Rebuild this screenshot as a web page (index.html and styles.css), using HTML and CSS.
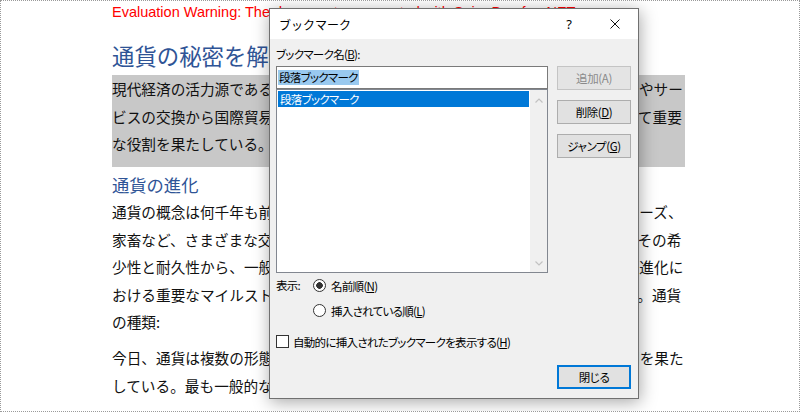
FILE: index.html
```html
<!DOCTYPE html>
<html lang="ja">
<head>
<meta charset="utf-8">
<title>ブックマーク</title>
<link rel="stylesheet" href="styles.css">
</head>
<body>
<div class="doc">
  <p class="warning">Evaluation Warning: The document was created with Spire.Doc for .NET.</p>
  <h1 class="h1">通貨の秘密を解き明かす</h1>
  <p class="para shaded">現代経済の活力源である通貨は、日常の買物から大規模な投資まで、各種の商品やサー<br>ビスの交換から国際貿易に至るまで、世界中のあらゆる経済活動において、極めて重要<br>な役割を果たしている。</p>
  <h2 class="h2">通貨の進化</h2>
  <p class="para p2">通貨の概念は何千年も前にさかのぼる。古代社会では、穀物や塩、貝殻、石、ビーズ、<br>家畜など、さまざまな交換手段が用いられていた。やがて、金や銀の貴金属が、その希<br>少性と耐久性から、一般的な交換手段として広く受け入れられ、通貨の歴史的な進化に<br>おける重要なマイルストーンとなった。現代では紙幣や硬貨が主流となっている。通貨<br>の種類:</p>
  <p class="para p3">今日、通貨は複数の形態で存在し、それぞれが世界経済の中で異なる重要な役割を果た<br>している。最も一般的な形態は、法定通貨である。</p>
</div>

<div class="dialog">
  <div class="titlebar">
    <span class="title">ブックマーク</span>
    <span class="tbtn help">?</span>
    <span class="tbtn close"><svg width="10" height="10" viewBox="0 0 10 10"><path d="M0.5 0.5L9.5 9.5M9.5 0.5L0.5 9.5" stroke="#111" stroke-width="1" fill="none"/></svg></span>
  </div>
  <div class="dbody">
    <div class="leftcol">
      <div class="label">ブックマーク名(<u>B</u>):</div>
      <div class="input"><span class="sel">段落ブックマーク</span></div>
      <div class="list">
        <div class="items"><div class="item selected">段落ブックマーク</div></div>
        <div class="scroll">
          <span class="sbtn up"><svg width="8" height="5" viewBox="0 0 8 5"><path d="M0.5 4.5L4 1L7.5 4.5" stroke="#c2c2c2" stroke-width="1.2" fill="none"/></svg></span>
          <span class="sbtn down"><svg width="8" height="5" viewBox="0 0 8 5"><path d="M0.5 0.5L4 4L7.5 0.5" stroke="#c2c2c2" stroke-width="1.2" fill="none"/></svg></span>
        </div>
      </div>
      <div class="sort">
        <span class="sortlabel">表示:</span>
        <div class="radios">
          <div class="opt"><span class="radio checked"></span>名前順(<u>N</u>)</div>
          <div class="opt"><span class="radio"></span>挿入されている順(<u>L</u>)</div>
        </div>
      </div>
      <div class="opt check-row"><span class="checkbox"></span>自動的に挿入されたブックマークを表示する(<u>H</u>)</div>
    </div>
    <div class="rightcol">
      <button class="btn" disabled>追加(A)</button>
      <button class="btn">削除(<u>D</u>)</button>
      <button class="btn">ジャンプ(<u>G</u>)</button>
      <button class="btn default">閉じる</button>
    </div>
  </div>
</div>
</body>
</html>
```
FILE: styles.css
```css
* {
  box-sizing: border-box;
  margin: 0;
  padding: 0;
}

html, body {
  width: 800px;
  height: 412px;
}

body {
  position: relative;
  overflow: hidden;
  background: #fff;
  border: 1px dotted #9a9a9a;
  font-family: "Noto Sans CJK JP", sans-serif;
  color: #111;
}

.doc {
  padding: 1px 0 0 111px;
}

.warning {
  font-family: "Liberation Sans", sans-serif;
  font-size: 14.5px;
  line-height: 20px;
  color: #ff0000;
  white-space: nowrap;
}

.h1 {
  margin-top: 18px;
  font-size: 22.4px;
  line-height: 30px;
  font-weight: normal;
  color: #2f5496;
  white-space: nowrap;
}

.para {
  width: 573px;
  font-size: 14.67px;
  line-height: 27.5px;
  white-space: nowrap;
}

.shaded {
  margin-top: 5px;
  padding-bottom: 9.5px;
  background: #c8c8c8;
}

.h2 {
  margin-top: 6px;
  font-size: 17.3px;
  line-height: 24px;
  font-weight: normal;
  color: #2f5496;
}

.p2 {
  margin-top: 1.25px;
}

.p3 {
  margin-top: 8.5px;
}

/* dialog */
.dialog {
  position: absolute;
  left: 268px;
  top: 7px;
  width: 370px;
  height: 391px;
  border: 1px solid #707070;
  background: #f0f0f0;
  box-shadow: 1px 3px 16px rgba(0, 0, 0, 0.35);
  display: flex;
  flex-direction: column;
  font-family: "Noto Sans CJK JP", sans-serif;
  font-size: 11.5px;
  font-feature-settings: "palt";
  letter-spacing: -0.7px;
  color: #000;
}

.titlebar {
  height: 30px;
  background: #fff;
  display: flex;
  align-items: center;
}

.title {
  flex: 1;
  padding-left: 9px;
  font-size: 12px;
  letter-spacing: 0;
  font-feature-settings: normal;
}

.tbtn {
  width: 46px;
  height: 30px;
  display: flex;
  align-items: center;
  justify-content: center;
}

.help {
  font-family: "Noto Sans", sans-serif;
  font-size: 13px;
  letter-spacing: 0;
}

.dbody {
  flex: 1;
  display: flex;
  gap: 9px;
  padding: 7px 7px 9px 6px;
}

.leftcol {
  width: 272px;
  display: flex;
  flex-direction: column;
}

.label {
  height: 16px;
  line-height: 16px;
  margin-bottom: 4px;
}

u {
  text-decoration: underline;
  text-underline-offset: 1px;
}

.input {
  height: 23px;
  border: 1px solid #7a7a7a;
  background: #fff;
  padding-left: 1px;
  display: flex;
  align-items: center;
}

.sel {
  background: #99c9ef;
  line-height: 15px;
  padding: 0 1px;
}

.list {
  height: 184px;
  border: 1px solid #828790;
  background: #fff;
  display: flex;
}

.items {
  flex: 1;
  padding: 1px;
}

.item {
  height: 16px;
  line-height: 16px;
  padding-left: 2px;
}

.item.selected {
  background: #0078d7;
  color: #fff;
}

.scroll {
  width: 17px;
  background: #f0f0f0;
  display: flex;
  flex-direction: column;
  justify-content: space-between;
}

.sbtn {
  height: 17px;
  display: flex;
  align-items: center;
  justify-content: center;
}

.sbtn.up {
  padding-top: 3px;
}

.sort {
  display: flex;
}

.sortlabel {
  width: 37px;
  line-height: 25px;
}

.radios {
  display: flex;
  flex-direction: column;
}

.opt {
  height: 25px;
  display: flex;
  align-items: center;
  white-space: nowrap;
}

.radio {
  width: 13px;
  height: 13px;
  flex-shrink: 0;
  border: 1px solid #333;
  border-radius: 50%;
  background: #fff;
  margin-right: 5px;
}

.radio.checked {
  background: radial-gradient(circle, #333 0 3px, #fff 3.6px);
}

.check-row {
  margin-top: 6px;
}

.checkbox {
  width: 13px;
  height: 13px;
  flex-shrink: 0;
  border: 1px solid #333;
  background: #fff;
  margin-right: 4px;
}

.rightcol {
  width: 74px;
  display: flex;
  flex-direction: column;
  gap: 10px;
  padding-top: 20px;
}

.btn {
  height: 24px;
  border: 1px solid #adadad;
  background: #e1e1e1;
  font-family: inherit;
  font-size: 11.5px;
  font-feature-settings: "palt";
  letter-spacing: -0.4px;
  color: #000;
  padding: 0;
}

.btn:disabled {
  color: #8a8a8a;
  border-color: #c4c4c4;
  background: #e4e4e4;
}

.btn.default {
  margin-top: auto;
  border: 2px solid #0078d7;
}
```
